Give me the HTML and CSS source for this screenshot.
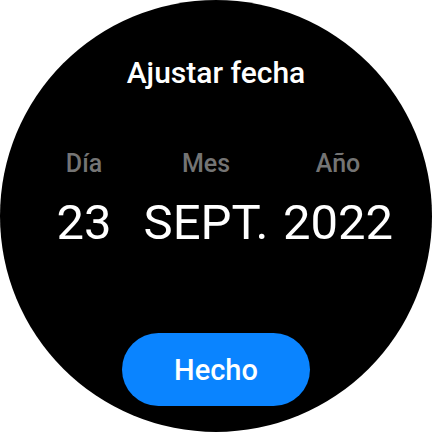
FILE: index.html
```html
<!DOCTYPE html>
<html lang="es">
<head>
    <meta charset="UTF-8">
    <meta name="viewport" content="width=device-width, initial-scale=1.0">
    <title>Ajustar fecha</title>
    <link rel="stylesheet" href="styles.css">
</head>
<body>
    <div class="watch">
        <h1 class="title">Ajustar fecha</h1>

        <div class="picker">
            <div class="col">
                <span class="label">Día</span>
                <span class="value">23</span>
            </div>
            <div class="col">
                <span class="label">Mes</span>
                <span class="value">SEPT.</span>
            </div>
            <div class="col">
                <span class="label">Año</span>
                <span class="value">2022</span>
            </div>
        </div>

        <button type="button" class="btn">Hecho</button>
    </div>
</body>
</html>
```

FILE: styles.css
```css
body {
    margin: 0;
    padding: 0;
    background: #ffffff;
    font-family: Roboto, "Noto Sans", sans-serif;
}

.watch {
    width: 432px;
    height: 432px;
    border-radius: 50%;
    background: #000000;
    display: flex;
    flex-direction: column;
    align-items: center;
    box-sizing: border-box;
    padding-top: 56px;
    overflow: hidden;
}

.title {
    margin: 0;
    font-size: 30px;
    line-height: 34px;
    font-weight: 500;
    color: #ffffff;
}

.picker {
    display: grid;
    grid-template-columns: 112px 132px 132px;
    margin-top: 59px;
}

.col {
    display: flex;
    flex-direction: column;
    align-items: center;
}

.label {
    font-size: 25px;
    line-height: 30px;
    font-weight: 500;
    color: #747474;
}

.value {
    margin-top: 16px;
    font-size: 49px;
    line-height: 56px;
    font-weight: 400;
    color: #ffffff;
}

.btn {
    margin-top: 82px;
    width: 188px;
    height: 73px;
    border: none;
    outline: none;
    border-radius: 40px;
    background: #0a84ff;
    color: #ffffff;
    font-family: Roboto, "Noto Sans", sans-serif;
    font-size: 29px;
    font-weight: 500;
    padding: 0;
    cursor: pointer;
}
```
